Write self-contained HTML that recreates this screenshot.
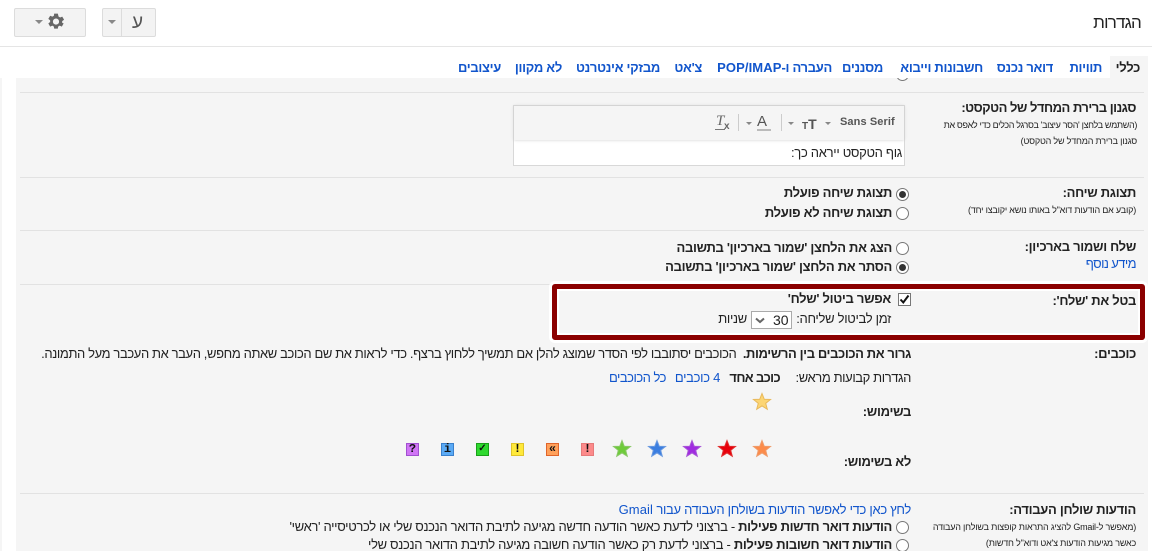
<!DOCTYPE html>
<html lang="he"><head><meta charset="utf-8"><title>הגדרות</title>
<style>
html,body{margin:0;padding:0;background:#fff;width:1152px;height:551px;overflow:hidden}
body{position:relative;font-family:"Liberation Sans",Arial,sans-serif;font-size:13px;color:#222;letter-spacing:-.3px}
.t{position:absolute;white-space:nowrap;direction:rtl;line-height:16px}
.b{font-weight:bold}.l{color:#15c}
.s{font-size:9px;color:#222;letter-spacing:-.2px}
.r,.a{position:absolute}
.la{letter-spacing:.1px}
.hr{position:absolute;left:20px;width:1124px;height:1px;background:#e2e2e2}
.btn{position:absolute;box-sizing:border-box;height:29px;top:8px;border:1px solid #dcdcdc;background:#f3f3f3;border-radius:2px}
.car{position:absolute;width:0;height:0;border:4px solid transparent;border-top-color:#888;border-bottom:0}
.radio{position:absolute;box-sizing:border-box;width:13px;height:13px;border:1px solid #777;border-radius:50%;background:#fff}
.radio.on:after{content:"";position:absolute;left:2px;top:2px;width:7px;height:7px;border-radius:50%;background:#333}
.sq{position:absolute;box-sizing:border-box;width:13px;height:13px;top:443px;border:1px solid;font:bold 12px/11px "Liberation Mono",monospace;letter-spacing:0;text-align:center;color:#111}
</style></head><body>
<div class="a" style="left:0;top:78px;width:2px;height:473px;background:#f5f5f5"></div>
<div class="a" style="left:16px;top:78px;width:1132px;height:473px;background:#f5f5f5"></div>
<div class="a" style="left:1110px;top:56px;width:38px;height:22px;background:#f5f5f5"></div>
<div class="a" style="left:0;top:46px;width:1152px;height:1px;background:#e5e5e5"></div>

<div class="btn" style="left:14px;width:72px"></div>
<div class="car" style="left:35px;top:20px"></div>
<svg class="a" style="left:46px;top:12px" width="20" height="20" viewBox="0 0 24 24"><path fill="#666" fill-rule="evenodd" d="M19.400 13a7.500 7.500 0 0 0 0-2l2.300-1.700-2.200-3.800-2.600 1.100a7.400 7.400 0 0 0-1.800-1L14.200 2H9.800l-.4 2.600a7.400 7.400 0 0 0-1.800 1L5 4.500 2.800 8.300 5 10a7.500 7.500 0 0 0 0 2l-2.200 1.700 2.200 3.800 2.600-1.100a7.400 7.400 0 0 0 1.800 1l.4 2.600h4.400l.4-2.600a7.400 7.400 0 0 0 1.800-1l2.600 1.100 2.200-3.800zM12 15.200a3.700 3.700 0 1 1 0-7.400 3.700 3.700 0 0 1 0 7.400z"/></svg>
<div class="btn" style="left:102px;width:20px;border-radius:2px 0 0 2px"></div>
<div class="car" style="left:108px;top:20px"></div>
<div class="btn" style="left:121px;width:35px;border-radius:0 2px 2px 0"></div>
<span class="t" style="left:132px;top:12px;font-size:19px;line-height:22px;color:#555">ע</span>

<span class="t" style="right:11px;top:12px;font-size:17px;line-height:22px;color:#222;letter-spacing:-.8px">הגדרות</span>

<span class="t b" style="right:12px;top:60px;color:#222">כללי</span>
<span class="t b l" style="right:50px;top:60px">תוויות</span>
<span class="t b l" style="right:99px;top:60px">דואר נכנס</span>
<span class="t b l" style="right:169px;top:60px">חשבונות וייבוא</span>
<span class="t b l" style="right:269px;top:60px">מסננים</span>
<span class="t b l" style="right:320px;top:60px">העברה ו-<span class="la">POP/IMAP</span></span>
<span class="t b l" style="right:450px;top:60px">צ'אט</span>
<span class="t b l" style="right:492px;top:60px">מבזקי אינטרנט</span>
<span class="t b l" style="right:590px;top:60px">לא מקוון</span>
<span class="t b l" style="right:651px;top:60px">עיצובים</span>

<div class="a" style="left:896px;top:78px;width:14px;height:3px;overflow:hidden"><div class="radio" style="left:0;top:-10px"></div></div>
<div class="hr" style="top:92px"></div>
<div class="hr" style="top:177px"></div>
<div class="hr" style="top:230px"></div>
<div class="hr" style="top:284px"></div>
<div class="hr" style="top:493px"></div>

<span class="t b" style="right:16px;top:100px;letter-spacing:-.5px">סגנון ברירת המחדל של הטקסט:</span>
<span class="t s" style="right:15px;top:117px;letter-spacing:-.35px">(השתמש בלחצן 'הסר עיצוב' בסרגל הכלים כדי לאפס את</span>
<span class="t s" style="right:15px;top:133px">סגנון ברירת המחדל של הטקסט)</span>

<div class="a" style="box-sizing:border-box;left:513px;top:105px;width:392px;height:61px;border:1px solid #d8d8d8;background:#fff"></div>
<div class="a" style="left:514px;top:106px;width:390px;height:34px;background:#f5f5f5;box-shadow:0 0 3px #ccc"></div>
<span class="a" style="left:840px;top:115px;font:bold 11px/14px 'Liberation Sans',sans-serif;letter-spacing:.1px;color:#555">Sans Serif</span>
<div class="car" style="left:825px;top:122px;border-width:3px;border-bottom:0"></div>
<span class="a" style="left:802px;top:116px;font:bold 14px/16px 'Liberation Sans',sans-serif;letter-spacing:0;color:#555"><span style="font-size:10px">T</span>T</span>
<div class="car" style="left:788px;top:122px;border-width:3px;border-bottom:0"></div>
<div class="a" style="left:781px;top:114px;width:1px;height:17px;background:#ccc"></div>
<span class="a" style="left:757px;top:114px;font:15px/15px 'Liberation Sans',sans-serif;letter-spacing:0;color:#555">A</span>
<div class="a" style="left:757px;top:129px;width:14px;height:2px;background:#bbb"></div>
<div class="car" style="left:746px;top:122px;border-width:3px;border-bottom:0"></div>
<div class="a" style="left:738px;top:114px;width:1px;height:17px;background:#ccc"></div>
<span class="a" style="left:716px;top:113px;font:italic 15px/16px 'Liberation Serif',serif;color:#666">T</span>
<div class="a" style="left:715px;top:129px;width:10px;height:1px;background:#777"></div>
<span class="a" style="left:724px;top:122px;font:bold 10px/10px 'Liberation Sans',sans-serif;color:#666">x</span>
<span class="t" style="right:250px;top:145px">גוף הטקסט ייראה כך:</span>

<span class="t b" style="right:16px;top:185px">תצוגת שיחה:</span>
<span class="t s" style="right:16px;top:202px">(קובע אם הודעות דוא"ל באותו נושא יקובצו יחד)</span>
<div class="radio on" style="left:896px;top:188px"></div>
<span class="t b" style="right:260px;top:185px">תצוגת שיחה פועלת</span>
<div class="radio" style="left:896px;top:207px"></div>
<span class="t b" style="right:260px;top:205px">תצוגת שיחה לא פועלת</span>

<span class="t b" style="right:16px;top:239px">שלח ושמור בארכיון:</span>
<span class="t l" style="right:16px;top:256px;letter-spacing:-.6px">מידע נוסף</span>
<div class="radio" style="left:896px;top:242px"></div>
<span class="t b" style="right:260px;top:240px">הצג את הלחצן 'שמור בארכיון' בתשובה</span>
<div class="radio on" style="left:896px;top:261px"></div>
<span class="t b" style="right:260px;top:259px">הסתר את הלחצן 'שמור בארכיון' בתשובה</span>

<div class="a" style="box-sizing:border-box;left:552px;top:284px;width:593px;height:56px;border:5px solid #8b0000;border-radius:3px;background:#f5f5f5;box-shadow:0 0 0 3px #fff,inset 0 0 0 2px #fff"></div>
<span class="t b" style="right:16px;top:293px">בטל את 'שלח':</span>
<div class="a" style="box-sizing:border-box;left:898px;top:293px;width:13px;height:13px;border:1px solid #777;background:#fff"></div>
<svg class="a" style="left:899px;top:294px" width="11" height="11" viewBox="0 0 11 11"><path d="M1.500 5.500 4.300 8.500 9.500 1.500" fill="none" stroke="#111" stroke-width="2"/></svg>
<span class="t b" style="right:261px;top:291px">אפשר ביטול 'שלח'</span>
<span class="t" style="right:261px;top:311px">זמן לביטול שליחה:</span>
<div class="a" style="box-sizing:border-box;left:751px;top:311px;width:41px;height:18px;border:1px solid #aaa;background:#fff"></div>
<span class="a" style="left:773px;top:312px;font-size:14px;line-height:16px;letter-spacing:0;color:#222">30</span>
<svg class="a" style="left:755px;top:317px" width="10" height="7" viewBox="0 0 10 7"><path d="M1 1.500 5 5 9 1.500" fill="none" stroke="#666" stroke-width="2"/></svg>
<span class="t" style="right:405px;top:311px">שניות</span>

<span class="t b" style="right:16px;top:346px">כוכבים:</span>
<span class="t" style="right:241px;top:346px;letter-spacing:-.39px"><b>גרור את הכוכבים בין הרשימות.</b>&nbsp; הכוכבים יסתובבו לפי הסדר שמוצג להלן אם תמשיך ללחוץ ברצף. כדי לראות את שם הכוכב שאתה מחפש, העבר את העכבר מעל התמונה.</span>
<span class="t" style="right:241px;top:370px;letter-spacing:-.4px">הגדרות קבועות מראש:</span>
<span class="t b" style="right:372px;top:370px;letter-spacing:-.65px">כוכב אחד</span>
<span class="t l" style="right:432px;top:370px">4 כוכבים</span>
<span class="t l" style="right:486px;top:370px;letter-spacing:-.5px">כל הכוכבים</span>
<span class="t b" style="right:241px;top:404px">בשימוש:</span>
<span class="t b" style="right:241px;top:454px">לא בשימוש:</span>

<svg class="a" style="left:0;top:0;pointer-events:none" width="1152" height="551">
<defs><path id="st" d="M0-8.500 2.300-2.700 8.500-2.500 3.700 1.300 5.300 7.300 0 3.900-5.300 7.300-3.700 1.300-8.500-2.500-2.300-2.700Z"/></defs>
<use href="#st" x="762" y="402" fill="#fcd573" stroke="#e8b95c"/>
<use href="#st" x="762" y="449" fill="#fc8b4a" stroke="#ef9b6a"/>
<use href="#st" x="727" y="449" fill="#e8000b" stroke="#e03030"/>
<use href="#st" x="692" y="449" fill="#a02be0" stroke="#a855d8"/>
<use href="#st" x="657" y="449" fill="#3b7ee0" stroke="#6a9ae0"/>
<use href="#st" x="622" y="449" fill="#6ecb3a" stroke="#8ac868"/>
</svg>
<div class="sq" style="left:581px;background:#fc8a8a;border-color:#e67a7a">!</div>
<div class="sq" style="left:546px;background:#ffa05a;border-color:#e0642a">«</div>
<div class="sq" style="left:511px;background:#ffe93a;border-color:#e0c42a">!</div>
<div class="sq" style="left:476px;background:#2fd92f;border-color:#1aa01a;font-size:10px">✓</div>
<div class="sq" style="left:441px;background:#5aaaf5;border-color:#3a80cc">i</div>
<div class="sq" style="left:406px;background:#d075f5;border-color:#a050d0">?</div>

<span class="t b" style="right:16px;top:502px">הודעות שולחן העבודה:</span>
<span class="t s" style="right:16px;top:519px">(מאפשר ל-Gmail להציג התראות קופצות בשולחן העבודה</span>
<span class="t s" style="right:16px;top:535px">כאשר מגיעות הודעות צ'אט ודוא"ל חדשות)</span>
<span class="t l" style="right:241px;top:502px">לחץ כאן כדי לאפשר הודעות בשולחן העבודה עבור <span class="la">Gmail</span></span>
<div class="radio" style="left:896px;top:521px"></div>
<span class="t" style="right:260px;top:519px;letter-spacing:-.33px"><b>הודעות דואר חדשות פעילות</b> - ברצוני לדעת כאשר הודעה חדשה מגיעה לתיבת הדואר הנכנס שלי או לכרטיסייה 'ראשי'</span>
<div class="radio" style="left:896px;top:539px"></div>
<span class="t" style="right:260px;top:537px;letter-spacing:-.33px"><b>הודעות דואר חשובות פעילות</b> - ברצוני לדעת רק כאשר הודעה חשובה מגיעה לתיבת הדואר הנכנס שלי</span>
</body></html>
